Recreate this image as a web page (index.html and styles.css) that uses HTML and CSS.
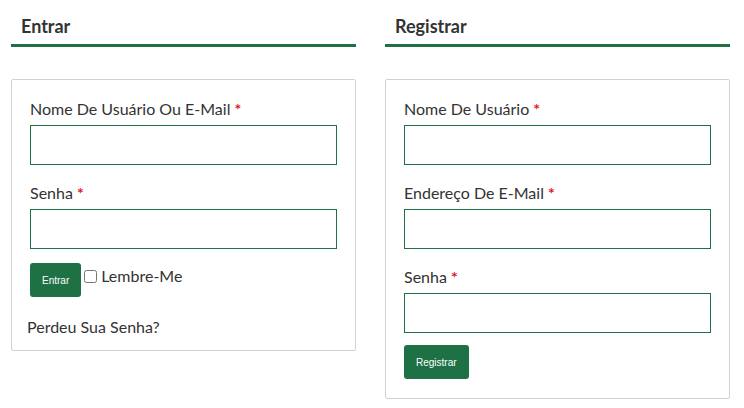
FILE: index.html
```html
<!DOCTYPE html>
<html lang="pt">
<head>
<meta charset="utf-8">
<title>Entrar / Registrar</title>
<link rel="stylesheet" href="styles.css">
</head>
<body>
<div class="page">
  <section class="col">
    <h2 class="col-title">Entrar</h2>
    <form class="box box-login">
      <label class="field-label">Nome De Usuário Ou E-Mail <span class="req">*</span></label>
      <input class="field-input" type="text">
      <label class="field-label">Senha <span class="req">*</span></label>
      <input class="field-input" type="password">
      <div class="login-row">
        <button class="btn" type="button">Entrar</button>
        <input class="remember-box" type="checkbox" id="rem">
        <label class="remember-label" for="rem">Lembre-Me</label>
      </div>
      <p class="lost">Perdeu Sua Senha?</p>
    </form>
  </section>
  <section class="col">
    <h2 class="col-title">Registrar</h2>
    <form class="box box-register">
      <label class="field-label">Nome De Usuário <span class="req">*</span></label>
      <input class="field-input" type="text">
      <label class="field-label">Endereço De E-Mail <span class="req">*</span></label>
      <input class="field-input" type="email">
      <label class="field-label">Senha <span class="req">*</span></label>
      <input class="field-input" type="password">
      <div class="register-row">
        <button class="btn" type="button">Registrar</button>
      </div>
    </form>
  </section>
</div>
</body>
</html>
```
FILE: styles.css
```css
* { box-sizing: border-box; }
html, body { margin: 0; padding: 0; background: #fff; }
body {
  font-family: Lato, "Open Sans", Arial, sans-serif;
  color: #333;
  width: 744px;
  height: 408px;
  overflow: hidden;
}
.page {
  display: flex;
  gap: 29px;
  padding: 15px 0 0 11px;
}
.col {
  width: 345px;
  flex: none;
}
.col-title {
  margin: 0;
  font-size: 18px;
  line-height: 22px;
  font-weight: 700;
  color: #333;
  padding: 0 0 7px 10px;
  border-bottom: 3px solid #1e7145;
}
.box {
  margin-top: 32px;
  border: 1px solid #d2d2d2;
  border-radius: 2px;
  padding: 18px 18px 19px 18px;
  display: flex;
  flex-direction: column;
}
.box-login { padding-bottom: 12px; }
.field-label {
  display: block;
  font-size: 16px;
  line-height: 22px;
  margin-bottom: 5px;
}
.req {
  color: #e2141b;
  font-weight: 700;
}
.field-input {
  display: block;
  width: 307px;
  height: 40px;
  border: 1px solid #1e7145;
  border-radius: 0;
  margin: 0 0 17px 0;
  padding: 0 8px;
  background: #fff;
  font-family: inherit;
}
.btn {
  background: #1e7145;
  color: #fff;
  border: none;
  border-radius: 3px;
  height: 34px;
  padding: 0 12px;
  font-family: "Liberation Sans", Arial, sans-serif;
  font-size: 10px;
  cursor: pointer;
}
.login-row {
  display: flex;
  align-items: flex-start;
  margin-top: -3px;
}
.remember-box {
  width: 13px;
  height: 13px;
  margin: 7px 0 0 3px;
}
.remember-label {
  font-size: 16px;
  line-height: 22px;
  margin: 2px 0 0 4px;
}
.lost {
  margin: 19px 0 0 -3px;
  font-size: 16px;
  line-height: 22px;
}
.register-row {
  display: flex;
  margin-top: -5px;
}
```
